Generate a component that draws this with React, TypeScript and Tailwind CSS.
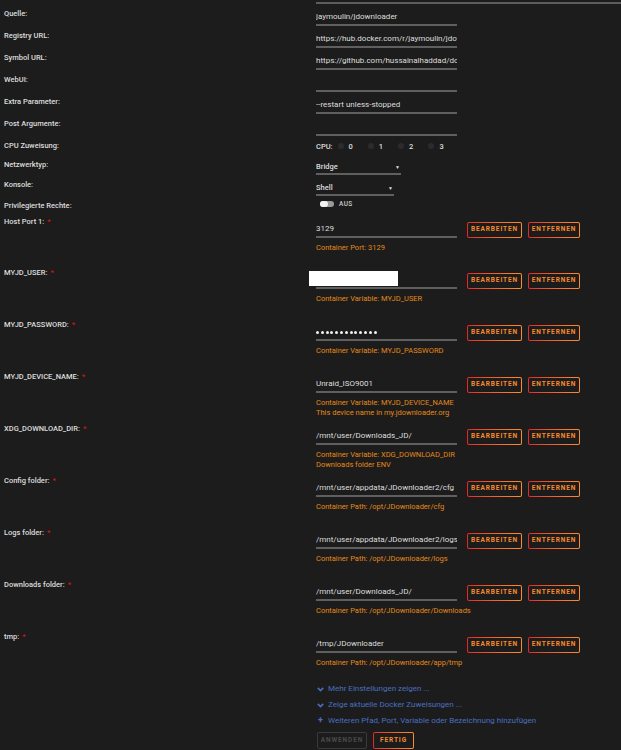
import React from 'react';

const FONT = { fontFamily: 'Roboto, "Liberation Sans", sans-serif' };

const SIMPLE_ROWS: { label: string; value: string }[] = [
  { label: 'Quelle:', value: 'jaymoulin/jdownloader' },
  { label: 'Registry URL:', value: 'https://hub.docker.com/r/jaymoulin/jdownloader/' },
  { label: 'Symbol URL:', value: 'https://github.com/hussainalhaddad/docker-templates/raw/master/jdownloader.png' },
  { label: 'WebUI:', value: '' },
  { label: 'Extra Parameter:', value: '--restart unless-stopped' },
  { label: 'Post Argumente:', value: '' },
];

type Config = {
  label: string;
  value: string;
  desc: string[];
  masked?: boolean;
  redacted?: boolean;
};

const CONFIGS: Config[] = [
  { label: 'Host Port 1:', value: '3129', desc: ['Container Port: 3129'] },
  { label: 'MYJD_USER:', value: '', desc: ['Container Variable: MYJD_USER'], redacted: true },
  { label: 'MYJD_PASSWORD:', value: '', desc: ['Container Variable: MYJD_PASSWORD'], masked: true },
  {
    label: 'MYJD_DEVICE_NAME:',
    value: 'Unraid_ISO9001',
    desc: ['Container Variable: MYJD_DEVICE_NAME', 'This device name in my.jdownloader.org'],
  },
  {
    label: 'XDG_DOWNLOAD_DIR:',
    value: '/mnt/user/Downloads_JD/',
    desc: ['Container Variable: XDG_DOWNLOAD_DIR', 'Downloads folder ENV'],
  },
  { label: 'Config folder:', value: '/mnt/user/appdata/JDownloader2/cfg', desc: ['Container Path: /opt/JDownloader/cfg'] },
  { label: 'Logs folder:', value: '/mnt/user/appdata/JDownloader2/logs', desc: ['Container Path: /opt/JDownloader/logs'] },
  { label: 'Downloads folder:', value: '/mnt/user/Downloads_JD/', desc: ['Container Path: /opt/JDownloader/Downloads'] },
  { label: 'tmp:', value: '/tmp/JDownloader', desc: ['Container Path: /opt/JDownloader/app/tmp'] },
];

const Label: React.FC<{ text: string; required?: boolean; pt?: string }> = ({ text, required, pt = 'pt-[5px]' }) => (
  <div className={`w-[316px] shrink-0 pl-[4px] ${pt} text-[7.5px] leading-[10px] font-medium text-[#dcdcdc]`}>
    {text}
    {required && <span className="ml-[3px] text-[#d01515]">*</span>}
  </div>
);

const GradientButton: React.FC<{ text: string; width: string; className?: string }> = ({ text, width, className = '' }) => (
  <div className={`${width} h-[16px] p-px rounded-[2px] bg-gradient-to-r from-[#e22828] to-[#ff8c2f] ${className}`}>
    <div className="w-full h-full rounded-[1px] bg-[#1c1c1c] flex items-center justify-center text-[6.5px] font-bold tracking-[0.9px] text-[#f78a2c]">
      {text}
    </div>
  </div>
);

const Chevron = () => (
  <svg width="7" height="5" viewBox="0 0 7 5" className="mr-[4px]">
    <path d="M0.8 0.9 L3.5 3.6 L6.2 0.9" stroke="#4a6fc0" strokeWidth="1.5" fill="none" />
  </svg>
);

export default function App() {
  return (
    <div className="w-[621px] h-[750px] bg-[#1c1c1c] overflow-hidden" style={FONT}>
      <div className="mt-[2px] ml-[316px] h-[2px] bg-[#5c5c5c]" />

      {SIMPLE_ROWS.map((r) => (
        <div key={r.label} className="flex h-[22px]">
          <Label text={r.label} />
          <div className="pt-[6px]">
            <div className="w-[141px] h-[16px] border-b-2 border-[#5f5f5f] text-[8px] leading-[14px] text-[#dedede] whitespace-nowrap overflow-hidden">
              {r.value}
            </div>
          </div>
        </div>
      ))}

      {/* CPU */}
      <div className="flex h-[19px]">
        <Label text="CPU Zuweisung:" />
        <div className="pt-[6px] flex items-center h-[16px] text-[7.5px] font-medium text-[#dcdcdc]">
          <span className="mr-[5px]">CPU:</span>
          {['0', '1', '2', '3'].map((c, i) => (
            <span key={c} className={`flex items-center ${i > 0 ? 'ml-[15px]' : ''}`}>
              <span className="w-[6px] h-[6px] rounded-full bg-[#2c2c2c] -mt-[3px] mr-[5px]" />
              {c}
            </span>
          ))}
        </div>
      </div>

      {/* Netzwerktyp */}
      <div className="flex h-[20px]">
        <Label text="Netzwerktyp:" />
        <div className="pt-[6px]">
          <div className="w-[85px] h-[14px] border-b-2 border-[#5f5f5f] flex items-center justify-between text-[7.5px] font-medium text-[#dcdcdc] leading-[12px]">
            <span>Bridge</span>
            <span className="text-[5px] mr-[1px]">▼</span>
          </div>
        </div>
      </div>

      {/* Konsole */}
      <div className="flex h-[21px]">
        <Label text="Konsole:" />
        <div className="pt-[6px]">
          <div className="w-[78px] h-[15px] border-b-2 border-[#5f5f5f] flex items-center justify-between text-[7.5px] font-medium text-[#dcdcdc] leading-[12px]">
            <span>Shell</span>
            <span className="text-[5px] mr-[1px]">▼</span>
          </div>
        </div>
      </div>

      {/* Privilegierte Rechte */}
      <div className="flex h-[16px]">
        <Label text="Privilegierte Rechte:" pt="pt-[5px]" />
        <div className="pt-[5px] pl-[4px] flex items-start">
          <div className="w-[14px] h-[6px] rounded-[3px] bg-[#9a9a9a] flex items-center">
            <div className="w-[8px] h-[6px] rounded-[3px] bg-[#f2f2f2]" />
          </div>
          <span className="ml-[5px] text-[6.5px] leading-[7px] font-medium text-[#cfcfcf] tracking-[0.4px]">AUS</span>
        </div>
      </div>

      {CONFIGS.map((c, idx) => (
        <div key={c.label} className={`flex ${idx === 0 ? 'h-[51px]' : 'h-[52px]'}`}>
          <Label text={c.label} required />
          <div className="pt-[10px]">
            <div className="flex items-start">
              <div className="relative w-[141px] h-[16px] border-b-2 border-[#5f5f5f] text-[8px] leading-[14px] text-[#dedede] whitespace-nowrap overflow-visible">
                {c.masked ? (
                  <div className="flex items-center gap-[1.8px] h-[14px]">
                    {Array.from({ length: 13 }).map((_, i) => (
                      <span key={i} className="w-[3px] h-[3px] rounded-full bg-[#f0f0f0]" />
                    ))}
                  </div>
                ) : (
                  <span className="block overflow-hidden">{c.value}</span>
                )}
                {c.redacted && <div className="absolute left-[-7px] top-[-2px] w-[89px] h-[15px] bg-white" />}
              </div>
              <GradientButton text="BEARBEITEN" width="w-[55px]" className="ml-[10px]" />
              <GradientButton text="ENTFERNEN" width="w-[52px]" className="ml-[6px]" />
            </div>
            <div className="mt-[5px]">
              {c.desc.map((d) => (
                <div key={d} className="text-[7.5px] leading-[10px] text-[#e3891a] whitespace-nowrap">
                  {d}
                </div>
              ))}
            </div>
          </div>
        </div>
      ))}

      <div className="pl-[317px] pt-[2px]">
        <div className="flex items-center h-[16px] text-[8px] text-[#4a6fc0]">
          <Chevron />
          Mehr Einstellungen zeigen ...
        </div>
        <div className="flex items-center h-[16px] text-[8px] text-[#4a6fc0]">
          <Chevron />
          Zeige aktuelle Docker Zuweisungen ...
        </div>
        <div className="flex items-center h-[15px] text-[8px] text-[#4a6fc0]">
          <span className="w-[7px] mr-[4px] text-[9px] font-bold leading-[9px] text-center">+</span>
          Weiteren Pfad, Port, Variable oder Bezeichnung hinzufügen
        </div>
        <div className="flex mt-[4px]">
          <div className="w-[50px] h-[17px] rounded-[2px] border border-[#3a3a3a] flex items-center justify-center text-[6.5px] font-bold tracking-[0.9px] text-[#4a4a4a]">
            ANWENDEN
          </div>
          <GradientButton text="FERTIG" width="w-[41px]" className="ml-[6px] h-[17px]" />
        </div>
      </div>
    </div>
  );
}
